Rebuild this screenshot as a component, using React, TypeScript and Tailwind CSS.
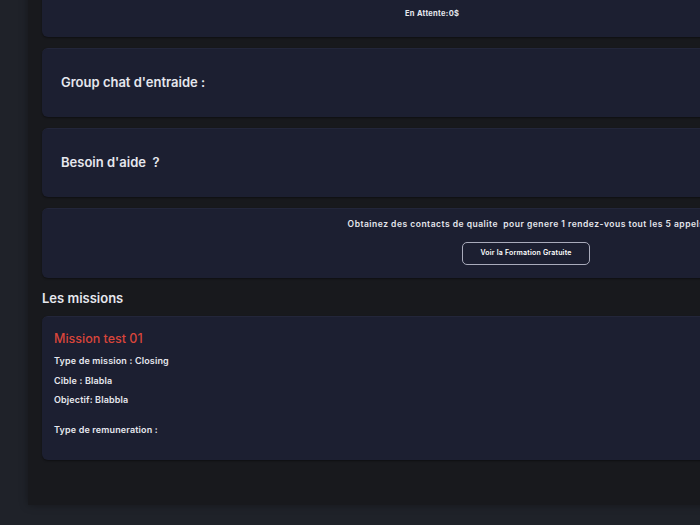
import React from 'react';

function Card({ children, className = '' }: { children: React.ReactNode; className?: string }) {
    return (
        <div className={`bg-[#1c1f31] rounded-md shadow-[0_1px_2px_rgba(0,0,0,0.4)] border-t border-[#23263a] ${className}`}>
            {children}
        </div>
    );
}

export default function App() {
    return (
        <div className="w-[700px] h-[525px] overflow-hidden bg-[#1f2229] font-['Inter',sans-serif] text-[#e6e7ee]">
            <div className="ml-[28px] -mt-[40px] w-[996px] h-[545px] bg-[#18191d] px-[14px] flex flex-col gap-[11px] shadow-[0_0_8px_rgba(0,0,0,0.35)]">
                {/* Earnings summary */}
                <Card className="h-[77px] flex flex-col justify-end pb-[20px] pl-[363px]">
                    <span className="text-[7.5px] font-bold leading-none tracking-[0.3px]">En Attente:0$</span>
                </Card>

                <Card className="h-[69px] flex items-center px-[19px]">
                    <span className="text-[13px] font-semibold">Group chat d'entraide :</span>
                </Card>

                <Card className="h-[69px] flex items-center px-[19px]">
                    <span className="text-[13px] font-semibold">Besoin d'aide&nbsp; ?</span>
                </Card>

                <Card className="h-[70px] flex flex-col items-center pt-[9px]">
                    <p className="text-[8.5px] font-semibold whitespace-nowrap tracking-[0.5px]">
                        Obtainez des contacts de qualite&nbsp; pour genere 1 rendez-vous tout les 5 appels
                    </p>
                    <button className="mt-[11px] h-[23px] w-[128px] rounded-[5px] border border-[#a9abbb] text-[7px] font-semibold text-white tracking-[0.2px]">
                        Voir la Formation Gratuite
                    </button>
                </Card>

                <h2 className="text-[13px] font-semibold -mb-[2px] leading-[18px]">Les missions</h2>

                <Card className="h-[144px] px-[12px] pt-[13px]">
                    <h3 className="text-[12.5px] font-medium text-[#d9453b] leading-[18px]">Mission test 01</h3>
                    <div className="mt-[3px] flex flex-col text-[9px] font-semibold leading-[19.5px] tracking-[0.15px]">
                        <span>Type de mission : Closing</span>
                        <span>Cible : Blabla</span>
                        <span>Objectif: Blabbla</span>
                        <span className="mt-[10px]">Type de remuneration :</span>
                    </div>
                </Card>
            </div>
        </div>
    );
}
